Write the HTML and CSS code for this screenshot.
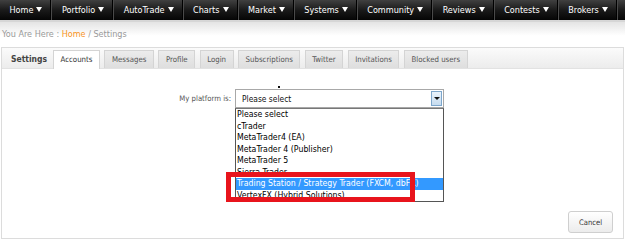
FILE: index.html
```html
<!DOCTYPE html>
<html lang="en">
  <head>
    <meta charset="UTF-8" />
    <title>Settings</title>
    <link rel="stylesheet" href="styles.css">
  </head>
  <body>
    <nav class="topnav">
      <ul>
        <li><a href="#">Home</a></li>
        <li><a href="#">Portfolio</a></li>
        <li><a href="#">AutoTrade</a></li>
        <li><a href="#">Charts</a></li>
        <li><a href="#">Market</a></li>
        <li><a href="#">Systems</a></li>
        <li><a href="#">Community</a></li>
        <li><a href="#">Reviews</a></li>
        <li><a href="#">Contests</a></li>
        <li><a href="#">Brokers</a></li>
        <li class="more"></li>
      </ul>
    </nav>

    <div class="breadcrumb">
      You Are Here : <a href="#">Home</a> / Settings
    </div>

    <section class="panel">
      <div class="tabs">
        <span class="tabs-title">Settings</span>
        <a class="tab active" href="#">Accounts</a>
        <a class="tab" href="#">Messages</a>
        <a class="tab" href="#">Profile</a>
        <a class="tab" href="#">Login</a>
        <a class="tab" href="#">Subscriptions</a>
        <a class="tab" href="#">Twitter</a>
        <a class="tab" href="#">Invitations</a>
        <a class="tab" href="#">Blocked users</a>
      </div>

      <div class="panel-body">
        <div class="field">
          <label>My platform is:</label>
          <div class="select">
            <span class="select-value">Please select</span>
            <span class="select-arrow"></span>
            <ul class="options">
              <li>Please select</li>
              <li>cTrader</li>
              <li>MetaTrader4 (EA)</li>
              <li>MetaTrader 4 (Publisher)</li>
              <li>MetaTrader 5</li>
              <li>Sierra Trader</li>
              <li class="selected">Trading Station / Strategy Trader (FXCM, dbFX)</li>
              <li>VertexFX (Hybrid Solutions)</li>
            </ul>
            <span class="mark"></span>
          </div>
          <span class="cursor-dot"></span>
        </div>

        <div class="actions">
          <button>Cancel</button>
        </div>
      </div>
    </section>
  </body>
</html>
```

FILE: styles.css
```css
body {
  margin: 0;
  font-family: "DejaVu Sans Condensed", "Liberation Sans", sans-serif;
  font-size: 9px;
  color: #333;
  background: #fff;
  overflow: hidden;
}

a {
  text-decoration: none;
}

.topnav {
  height: 20px;
  background: linear-gradient(#404040, #1a1a1a 50%, #050505);
  border-bottom: 2px solid #d6d6d6;
}

.topnav ul {
  display: flex;
  margin: 0;
  padding: 0;
  list-style: none;
  white-space: nowrap;
}

.topnav li {
  border-left: 1px solid #4a4a4a;
  border-right: 1px solid #000;
}

.topnav li:first-child {
  border-left: none;
}

.topnav li.more {
  flex: 1;
  border-right: none;
}

.topnav a {
  display: block;
  height: 20px;
  line-height: 20px;
  padding: 0 8px 0 9.5px;
  color: #fff;
  font-size: 9px;
}

.topnav a::after {
  content: "";
  display: inline-block;
  margin-left: 3px;
  vertical-align: 1px;
  border-left: 3px solid transparent;
  border-right: 3px solid transparent;
  border-top: 5px solid #fff;
}

.breadcrumb {
  height: 25px;
  line-height: 24px;
  padding-left: 2px;
  color: #999;
  font-size: 9px;
  background: linear-gradient(#e4e4e4, #fff 55%);
}

.breadcrumb a {
  color: #f7941d;
}

.panel {
  margin: 0 1px;
  height: 192px;
  border: 1px solid #dcdcdc;
  box-sizing: border-box;
}

.tabs {
  display: flex;
  align-items: flex-end;
  height: 20px;
  padding-left: 3px;
  background: linear-gradient(#fbfbfb, #ececec);
  border-bottom: 1px solid #e2e2e2;
}

.tabs-title {
  width: 48px;
  height: 17px;
  line-height: 17px;
  text-align: center;
  font-size: 8.5px;
  font-weight: bold;
  color: #444;
}

.tab {
  height: 17px;
  line-height: 17px;
  padding: 0 6.5px;
  font-size: 7.8px;
  color: #555;
  background: linear-gradient(#ececec, #dedede);
  border: 1px solid #d4d4d4;
  border-bottom: none;
}

.tab + .tab {
  margin-left: 4.5px;
}

.tab.active {
  background: #fff;
  color: #333;
  height: 18px;
  margin-bottom: -1px;
}

.panel-body {
  position: relative;
  height: 170px;
}

.field {
  display: flex;
  align-items: center;
  padding-top: 20px;
}

.field label {
  width: 229px;
  margin-right: 4px;
  text-align: right;
  font-size: 7.7px;
  color: #555;
}

.select {
  position: relative;
  display: flex;
  align-items: center;
  width: 209px;
  height: 19px;
  box-sizing: border-box;
  border: 1px solid #a8a8a8;
  font-size: 8.4px;
  color: #111;
}

.select-value {
  flex: 1;
  padding-left: 6px;
}

.select-arrow {
  width: 11px;
  height: 15px;
  margin-right: 1px;
  box-sizing: border-box;
  border: 1px solid #7ea7cc;
  background: linear-gradient(#eaf3fb, #c7dcef);
  position: relative;
}

.select-arrow::after {
  content: "";
  position: absolute;
  left: 1.5px;
  top: 5px;
  border-left: 3px solid transparent;
  border-right: 3px solid transparent;
  border-top: 3px solid #111;
}

.options {
  position: absolute;
  top: 18px;
  left: -1px;
  width: 209px;
  margin: 0;
  padding: 0;
  list-style: none;
  box-sizing: border-box;
  border: 1px solid #555;
  border-top: 1px solid #777;
  background: #fff;
  overflow: hidden;
  z-index: 2;
}

.options li {
  height: 11.5px;
  line-height: 11.5px;
  padding-left: 1px;
  white-space: nowrap;
  font-size: 8.7px;
  color: #000;
}

.options li.selected {
  background: #3399ff;
  color: #fff;
}

.mark {
  position: absolute;
  top: 82px;
  left: -10px;
  width: 189px;
  height: 30px;
  box-sizing: border-box;
  border: 5px solid #e8141c;
  z-index: 3;
}

.cursor-dot {
  position: absolute;
  top: 17px;
  left: 276px;
  width: 2px;
  height: 2px;
  background: #111;
}

.actions {
  position: absolute;
  right: 10px;
  bottom: 6px;
}

.actions button {
  width: 45px;
  height: 22px;
  padding: 0;
  font-family: "DejaVu Sans Condensed", "Liberation Sans", sans-serif;
  font-size: 7.6px;
  color: #333;
  background: linear-gradient(#fff, #ececec);
  border: 1px solid #cfcfcf;
  border-radius: 3px;
}
```
